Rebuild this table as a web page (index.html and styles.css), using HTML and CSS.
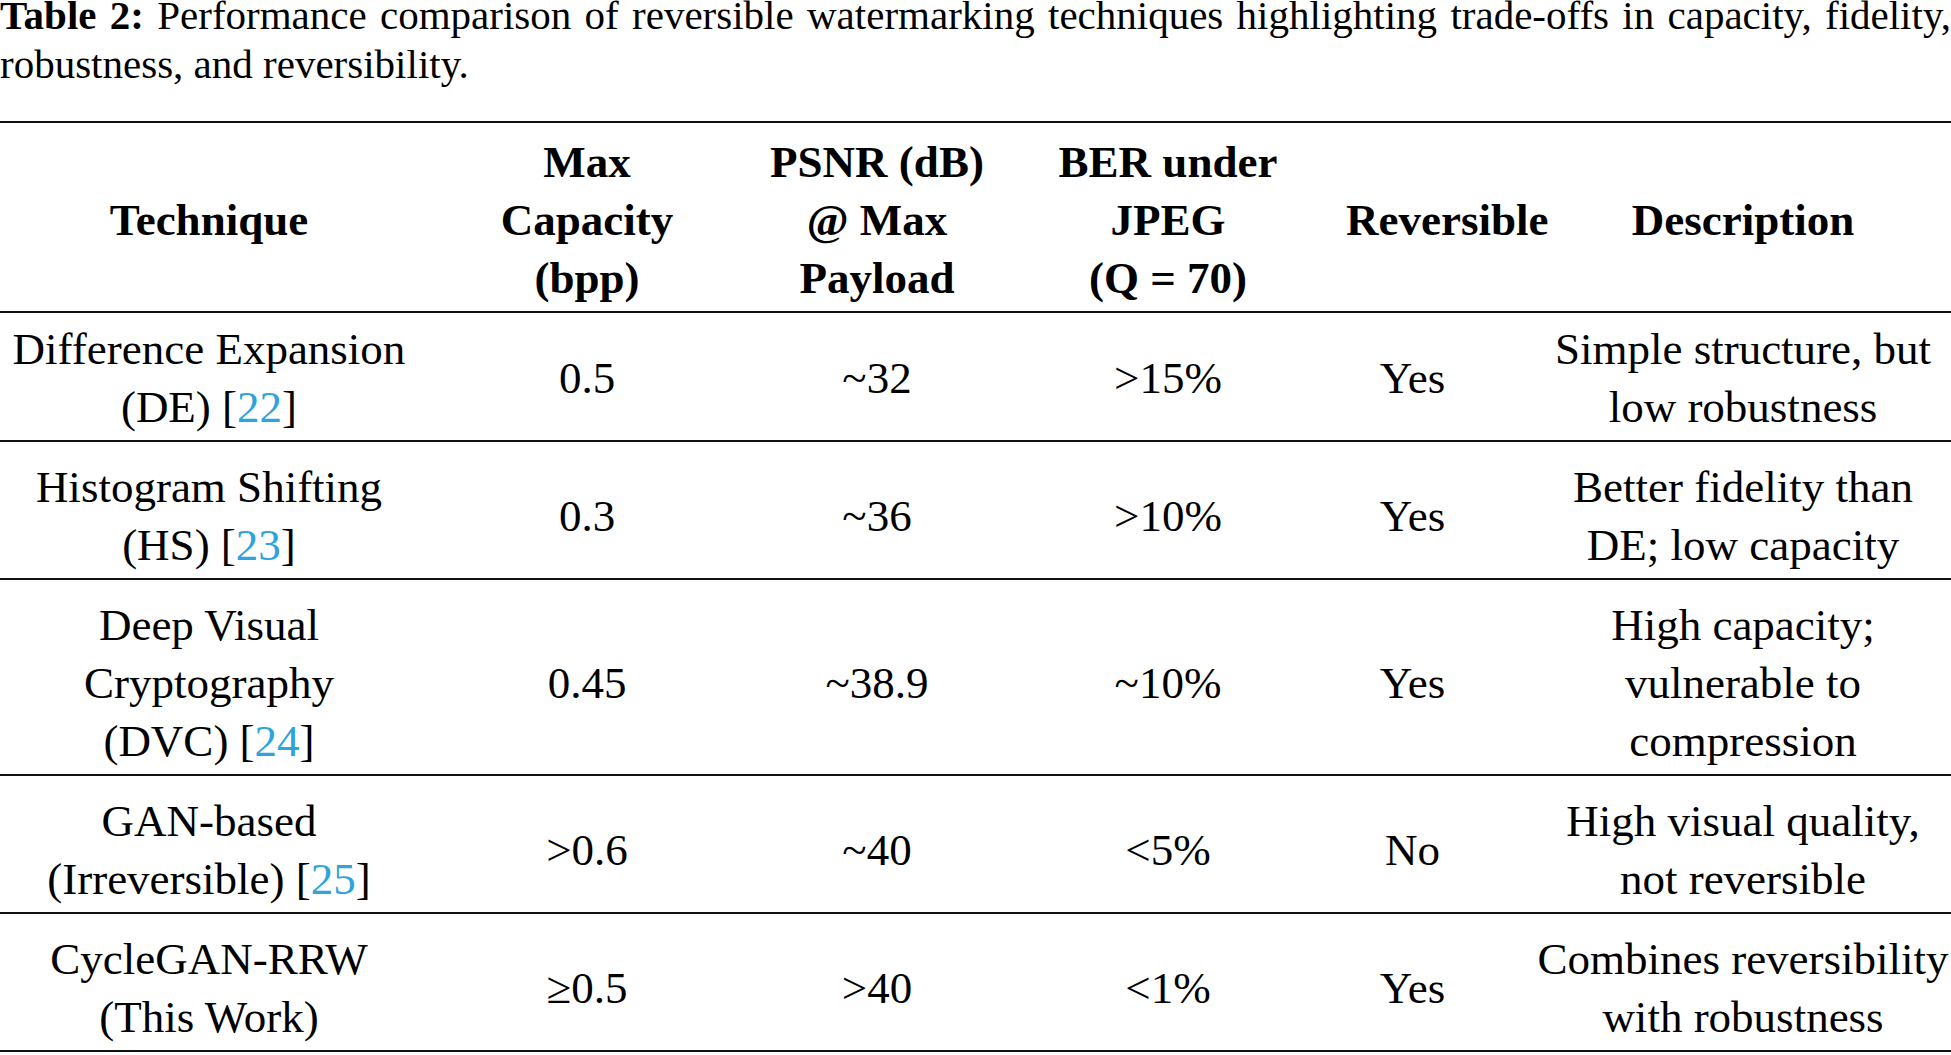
FILE: index.html
```html
<!DOCTYPE html>
<html lang="en">
<head>
<meta charset="utf-8">
<title>Table 2</title>
<link rel="stylesheet" href="styles.css">
</head>
<body>
<div class="caption">
  <div class="caption-line first"><span class="label">Table 2:</span> Performance comparison of reversible watermarking techniques highlighting trade-offs in capacity, fidelity,</div>
  <div class="caption-line">robustness, and reversibility.</div>
</div>
<table class="results">
  <colgroup>
    <col class="c-tech">
    <col class="c-cap">
    <col class="c-psnr">
    <col class="c-ber">
    <col class="c-rev">
    <col class="c-desc">
  </colgroup>
  <thead>
    <tr>
      <th>Technique</th>
      <th>Max<br>Capacity<br>(bpp)</th>
      <th>PSNR (dB)<br>@ Max<br>Payload</th>
      <th>BER under<br>JPEG<br>(Q = 70)</th>
      <th class="rev-head">Reversible</th>
      <th>Description</th>
    </tr>
  </thead>
  <tbody>
    <tr class="first-row">
      <td>Difference Expansion<br>(DE) [<span class="ref">22</span>]</td>
      <td>0.5</td>
      <td>~32</td>
      <td>&gt;15%</td>
      <td class="rev">Yes</td>
      <td>Simple structure, but<br>low robustness</td>
    </tr>
    <tr>
      <td>Histogram Shifting<br>(HS) [<span class="ref">23</span>]</td>
      <td>0.3</td>
      <td>~36</td>
      <td>&gt;10%</td>
      <td class="rev">Yes</td>
      <td>Better fidelity than<br>DE; low capacity</td>
    </tr>
    <tr>
      <td>Deep Visual<br>Cryptography<br>(DVC) [<span class="ref">24</span>]</td>
      <td>0.45</td>
      <td>~38.9</td>
      <td>~10%</td>
      <td class="rev">Yes</td>
      <td>High capacity;<br>vulnerable to<br>compression</td>
    </tr>
    <tr>
      <td>GAN-based<br>(Irreversible) [<span class="ref">25</span>]</td>
      <td>&gt;0.6</td>
      <td>~40</td>
      <td>&lt;5%</td>
      <td class="rev">No</td>
      <td>High visual quality,<br>not reversible</td>
    </tr>
    <tr>
      <td>CycleGAN-RRW<br>(This Work)</td>
      <td>&ge;0.5</td>
      <td>&gt;40</td>
      <td>&lt;1%</td>
      <td class="rev">Yes</td>
      <td>Combines reversibility<br>with robustness</td>
    </tr>
  </tbody>
</table>
</body>
</html>
```

FILE: styles.css
```css
html, body {
  margin: 0;
  padding: 0;
  background: #ffffff;
  overflow: hidden;
}

body {
  color: #000000;
  font-family: "Liberation Serif", "Times New Roman", serif;
}

.caption {
  margin-top: -9px;
  font-size: 41px;
  line-height: 49px;
}

.caption-line {
  white-space: nowrap;
}

.caption-line.first {
  text-align: justify;
  text-align-last: justify;
}

.label {
  font-weight: bold;
}

.results {
  margin-top: 32px;
  width: 1951px;
  table-layout: fixed;
  border-collapse: separate;
  border-spacing: 0;
  font-size: 45px;
  line-height: 58px;
}

.c-tech { width: 418px; }
.c-cap  { width: 338px; }
.c-psnr { width: 242px; }
.c-ber  { width: 340px; }
.c-rev  { width: 197px; }
.c-desc { width: 416px; }

.results th,
.results td {
  padding: 16px 0 4px 0;
  text-align: center;
  vertical-align: middle;
  white-space: nowrap;
  border-bottom: 2px solid #111111;
}

.results th {
  font-weight: bold;
  padding-top: 10px;
  border-top: 2px solid #111111;
}

.results th.rev-head {
  padding-left: 8px;
}

.results td.rev {
  padding-right: 48px;
}

.results tr.first-row td {
  padding-top: 7px;
}

.ref {
  color: #2ea3dc;
}
```
